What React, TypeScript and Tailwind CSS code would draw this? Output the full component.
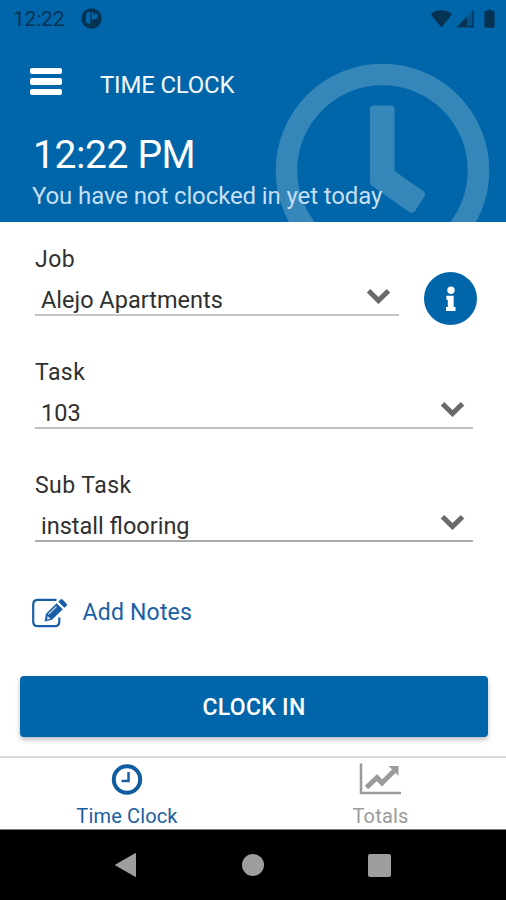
import React from "react";

interface SelectFieldProps {
  label: string;
  value: string;
  lineColor: string;
}

const StatusBar: React.FC = () => {
  return (
    <div className="flex h-9 items-center pl-[13px] pr-[10px] pt-[2px] text-[#053354]">
      <span className="w-[68px] text-[21px] leading-6 tracking-[-0.2px]">12:22</span>
      <svg className="-mt-[2px]" width="21" height="21" viewBox="0 0 21 21">
        <circle cx="10.5" cy="10.5" r="10.2" fill="currentColor" />
        <path d="M5 7q.5-3 3.400-3h1v11.800H7.300Q5 15.400 5 13.600z" fill="#0066a9" />
        <path d="M10.600 4h1.300v2.700h2.300V4.900c2.300.6 3.100 2 2.600 3.900-.5 1.800-2.200 2.700-4.300 2.700h-1.900z" fill="#0066a9" />
      </svg>
      <svg className="ml-auto -mt-[1px]" width="66" height="20" viewBox="0 0 66 20" fill="currentColor">
        <path d="M.6 5.200C6.500-.1 16.300-.1 22.200 5.200L11.400 18.500z" />
        <path d="M26.500 18.200L43.800 1v17.200z" opacity=".35" />
        <path d="M26.500 18.200L37 7.700v10.500zM43.800 1v17.200h-6.800v-1.500h5.500V2.300z" />
        <path d="M54.400 3.200q0-1.200 1.200-1.200h1.700V.7h4.400V2h1.700q1.200 0 1.200 1.200v14.300q0 1.200-1.200 1.200h-7.800q-1.200 0-1.200-1.200z" />
      </svg>
    </div>
  );
};

const Header: React.FC = () => {
  return (
    <header className="relative h-[222px] overflow-hidden bg-[#0066a9]">
      <svg className="absolute left-[275px] top-[63px]" width="216" height="216" viewBox="0 0 216 216">
        <circle cx="107.500" cy="107.500" r="96" fill="none" stroke="#3587ba" strokeWidth="21.500" />
        <path
          d="M98.500 42.500h17.500q3.500 0 3.500 3.500v62l28.500 20q3.500 2.500 1.500 5.500l-9.500 14.500q-2.500 3-5.500 1.300L96.500 122.500q-1.500-1-1.500-3V46q0-3.500 3.500-3.500z"
          fill="#3587ba"
        />
      </svg>
      <div className="relative">
        <StatusBar />
        <div className="flex h-[95px] items-center pb-[4px] pl-[30px]">
          <button aria-label="Menu" className="flex w-8 flex-col gap-[4px]">
            <span className="h-[6.500px] rounded-[2px] bg-white" />
            <span className="h-[6.500px] rounded-[2px] bg-white" />
            <span className="h-[6.500px] rounded-[2px] bg-white" />
          </button>
          <h1 className="ml-[38px] mt-[6px] text-[24px] leading-8 tracking-[-0.2px] text-[#f2f8fc]">TIME CLOCK</h1>
        </div>
        <p className="pl-[33px] text-[39px] leading-[48px] tracking-[-0.400px] text-white">12:22 PM</p>
        <p className="pl-[32px] text-[24px] leading-[34px] tracking-[-0.120px] text-[#c6dff2]">
          You have not clocked in yet today
        </p>
      </div>
    </header>
  );
};

const SelectField: React.FC<SelectFieldProps> = ({ label, value, lineColor }) => {
  return (
    <div className="flex-1">
      <div className="text-[23px] leading-8 tracking-[0.450px] text-[#303030]">{label}</div>
      <div className={`flex h-[40px] items-center justify-between border-b-2 pl-[6px] pr-[8px] pt-[10px] ${lineColor}`}>
        <span className="text-[23.500px] leading-8 text-[#303030]">{value}</span>
        <svg className="mb-[8px]" width="25" height="16" viewBox="0 0 25 16">
          <path d="M2.500 2.800L12.500 12.600L22.500 2.800" fill="none" stroke="#6a6a6a" strokeWidth="5" />
        </svg>
      </div>
    </div>
  );
};

const BottomTabs: React.FC = () => {
  return (
    <nav className="grid h-[74px] grid-cols-2 border-b border-t-2 border-b-[#777] border-t-[#d9d9d9] bg-white">
      <div className="flex flex-col items-center pt-[5px] text-[#1c5f9f]">
        <svg width="32" height="32" viewBox="0 0 32 32" fill="none" stroke="currentColor">
          <circle cx="16" cy="16.500" r="13.200" strokeWidth="4" stroke="#0f5da0" />
          <path d="M17.500 9v9H10.500" strokeWidth="2.500" />
        </svg>
        <span className="ml-[1px] mt-[7px] text-[20px] leading-7 tracking-[0.150px]">Time Clock</span>
      </div>
      <div className="flex flex-col items-center pt-[5px] text-[#9b9b9b]">
        <svg width="42" height="32" viewBox="0 0 42 32" fill="none" stroke="currentColor">
          <path d="M2 .500v29.500h40" strokeWidth="2.500" />
          <path d="M7.500 24.500L18 14.500L23 20L35 8" strokeWidth="5" />
          <path d="M29.500 3h10v10z" fill="currentColor" stroke="none" />
        </svg>
        <span className="ml-[2px] mt-[7px] text-[20px] leading-7 tracking-[0.200px]">Totals</span>
      </div>
    </nav>
  );
};

const SystemNav: React.FC = () => {
  return (
    <div className="grid h-[70px] grid-cols-[1fr_24px_1fr] items-center bg-black">
      <svg className="ml-[114px]" width="24" height="26" viewBox="0 0 24 26" fill="#9e9e9e">
        <path d="M21.500 1.500v23L1.500 13z" stroke="#9e9e9e" strokeLinejoin="round" />
      </svg>
      <span className="ml-[1px] h-[22px] w-[22px] rounded-full bg-[#9e9e9e]" />
      <span className="ml-[103px] h-[23px] w-[23px] rounded-[2px] bg-[#9e9e9e]" />
    </div>
  );
};

const App: React.FC = () => {
  return (
    <div className="flex h-[900px] w-[506px] flex-col bg-white font-[Roboto,sans-serif]">
      <Header />
      <main className="flex flex-1 flex-col px-5 pt-[22px]">
        <div className="flex h-[81px] pl-[15px]">
          <SelectField label="Job" value="Alejo Apartments" lineColor="border-[#c4c7c7]" />
          <button
            aria-label="Job info"
            className="ml-[25px] mr-[9px] mt-[28px] flex h-[53px] w-[53px] items-center justify-center rounded-full bg-[#0066a9]"
          >
            <svg width="12" height="26" viewBox="0 0 12 26" fill="#fff">
              <circle cx="6" cy="4.300" r="3.700" />
              <path d="M1.300 9.700h7.400v11.300h1.800v4H1v-4h1.800v-7.300H1.300z" />
            </svg>
          </button>
        </div>
        <div className="mt-[32px] flex pl-[15px] pr-[13px]">
          <SelectField label="Task" value="103" lineColor="border-[#bcc0c0]" />
        </div>
        <div className="mt-[41px] flex pl-[15px] pr-[13px]">
          <SelectField label="Sub Task" value="install flooring" lineColor="border-[#a9acac]" />
        </div>
        <button className="mt-[53px] flex h-9 items-center self-start pl-[11px] text-[#1a5fa5]">
          <svg width="38" height="32" viewBox="0 0 38 32" fill="none" stroke="currentColor">
            <path
              d="M25.500 2.800H7Q2.200 2.800 2.200 7.600V24.400Q2.200 29.200 7 29.200H23.500Q28.300 29.200 28.300 24.400V20.500"
              strokeWidth="2.200"
            />
            <path d="M25.600 6.300L31.800 12.300L21 22.800L13.600 24.500L15 16.800Z" fill="currentColor" stroke="none" />
            <path d="M27.200 4.700L29.600 2.500Q30.600 1.700 31.600 2.600L35.600 6.700Q36.500 7.700 35.600 8.700L33.400 10.800Z" fill="currentColor" stroke="none" />
            <path d="M17.500 17.300L25.500 9.500" stroke="#b9d3ea" strokeWidth="1.300" />
            <path d="M16.600 19L19.600 21.800L16 22.500Z" fill="#dbe9f5" stroke="none" />
          </svg>
          <span className="ml-[13.500px] text-[23px] leading-8 tracking-[0.200px]">Add Notes</span>
        </button>
        <button className="mt-[45px] h-[61px] w-[468px] rounded-[4px] bg-[#0066a9] pt-[2px] text-[23px] font-medium leading-8 tracking-[0.300px] text-white shadow-[0_3px_5px_rgba(0,0,0,0.25)]">
          CLOCK IN
        </button>
      </main>
      <BottomTabs />
      <SystemNav />
    </div>
  );
};

export default App;
